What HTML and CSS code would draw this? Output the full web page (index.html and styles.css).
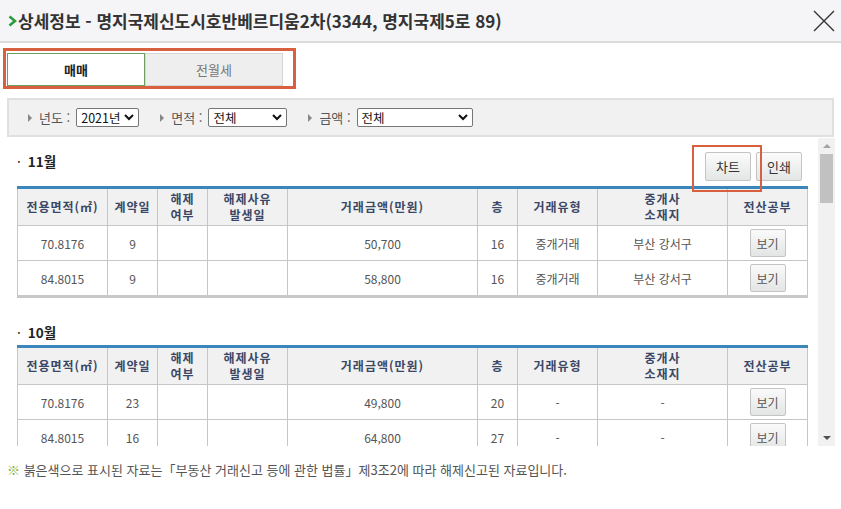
FILE: index.html
```html
<!DOCTYPE html>
<html lang="ko">
  <head>
    <meta charset="UTF-8" />
    <meta name="viewport" content="width=device-width, initial-scale=1.0" />
    <title>상세정보</title>
    <link rel="stylesheet" href="styles.css">
  </head>
  <body>
    <!-- 제목 -->
    <div class="header">
      <h1 class="title">
        <svg class="chev" width="9" height="12" viewBox="0 0 9 12"><polyline points="1.5,1.5 7,6 1.5,10.5" fill="none" stroke="#2a9a3c" stroke-width="2.6" /></svg>
        상세정보 - 명지국제신도시호반베르디움2차(3344, 명지국제5로 89)
      </h1>
      <a href="#" class="close">
        <svg width="22" height="22" viewBox="0 0 22 22"><path d="M1 1 L21 21 M21 1 L1 21" stroke="#333" stroke-width="1.4" /></svg>
      </a>
    </div>

    <!-- 탭 -->
    <div class="tabs-mark">
      <div class="tabs">
        <a href="#" class="tab active">매매</a>
        <a href="#" class="tab">전월세</a>
      </div>
    </div>

    <!-- 검색조건 -->
    <div class="filter">
      <div class="filter-item">
        <span class="tri"></span>
        <span class="label">년도 :</span>
        <div class="select sel-year">2021년 <svg width="10" height="7" viewBox="0 0 10 7"><polyline points="1,1 5,5 9,1" fill="none" stroke="#111" stroke-width="2" /></svg></div>
      </div>
      <div class="filter-item">
        <span class="tri"></span>
        <span class="label">면적 :</span>
        <div class="select sel-area">전체 <svg width="10" height="7" viewBox="0 0 10 7"><polyline points="1,1 5,5 9,1" fill="none" stroke="#111" stroke-width="2" /></svg></div>
      </div>
      <div class="filter-item">
        <span class="tri"></span>
        <span class="label">금액 :</span>
        <div class="select sel-price">전체 <svg width="10" height="7" viewBox="0 0 10 7"><polyline points="1,1 5,5 9,1" fill="none" stroke="#111" stroke-width="2" /></svg></div>
      </div>
    </div>

    <!-- 목록 -->
    <div class="scroll">
      <div class="scroll-content">
        <div class="month">
          <div class="month-head">
            <h3><span class="dot">·</span>11월</h3>
            <div class="actions">
              <button class="btn mark">차트</button>
              <button class="btn">인쇄</button>
            </div>
          </div>
          <table class="deal">
            <colgroup>
              <col style="width:90px" /><col style="width:50px" /><col style="width:50px" /><col style="width:80px" /><col style="width:190px" /><col style="width:40px" /><col style="width:80px" /><col style="width:130px" /><col style="width:80px" />
            </colgroup>
            <tr>
              <th>전용면적(㎡)</th><th>계약일</th><th>해제<br />여부</th><th>해제사유<br />발생일</th><th>거래금액(만원)</th><th>층</th><th>거래유형</th><th>중개사<br />소재지</th><th>전산공부</th>
            </tr>
            <tr>
              <td>70.8176</td><td>9</td><td></td><td></td><td>50,700</td><td>16</td><td>중개거래</td><td>부산 강서구</td><td><button class="btn-view">보기</button></td>
            </tr>
            <tr>
              <td>84.8015</td><td>9</td><td></td><td></td><td>58,800</td><td>16</td><td>중개거래</td><td>부산 강서구</td><td><button class="btn-view">보기</button></td>
            </tr>
          </table>
        </div>

        <div class="month">
          <div class="month-head">
            <h3><span class="dot">·</span>10월</h3>
          </div>
          <table class="deal">
            <colgroup>
              <col style="width:90px" /><col style="width:50px" /><col style="width:50px" /><col style="width:80px" /><col style="width:190px" /><col style="width:40px" /><col style="width:80px" /><col style="width:130px" /><col style="width:80px" />
            </colgroup>
            <tr>
              <th>전용면적(㎡)</th><th>계약일</th><th>해제<br />여부</th><th>해제사유<br />발생일</th><th>거래금액(만원)</th><th>층</th><th>거래유형</th><th>중개사<br />소재지</th><th>전산공부</th>
            </tr>
            <tr>
              <td>70.8176</td><td>23</td><td></td><td></td><td>49,800</td><td>20</td><td>-</td><td>-</td><td><button class="btn-view">보기</button></td>
            </tr>
            <tr>
              <td>84.8015</td><td>16</td><td></td><td></td><td>64,800</td><td>27</td><td>-</td><td>-</td><td><button class="btn-view">보기</button></td>
            </tr>
          </table>
        </div>
      </div>

      <div class="scrollbar">
        <span class="arrow up"></span>
        <div class="track"><div class="thumb"></div></div>
        <span class="arrow down"></span>
      </div>
    </div>

    <p class="note"><span class="mark-sym">※</span> 붉은색으로 표시된 자료는「부동산 거래신고 등에 관한 법률」제3조2에 따라 해제신고된 자료입니다.</p>
  </body>
</html>
```

FILE: styles.css
```css
body {
  font-family: "Noto Sans CJK KR", "Noto Sans", sans-serif;
  background: #fff;
  color: #333;
  margin: 0;
  padding: 0;
  width: 841px;
}

.header {
  height: 41px;
  background: #f5f5f7;
  border-bottom: 2px solid #dcdcdc;
  display: flex;
  align-items: center;
  justify-content: space-between;
  padding: 0 6px 0 8px;
}

.title {
  margin: 0;
  font-size: 17px;
  font-weight: bold;
  color: #333;
  display: flex;
  align-items: center;
}

.chev {
  margin-right: 1px;
}

.close {
  display: block;
  height: 22px;
  margin-top: 1px;
}

.tabs-mark {
  width: 286px;
  margin: 5px 0 0 3px;
  padding: 2px 0 0 1px;
  border: 3px solid #d9603f;
}

.tabs {
  display: flex;
}

.tab {
  width: 138px;
  height: 33px;
  box-sizing: border-box;
  display: flex;
  align-items: center;
  justify-content: center;
  font-size: 13px;
  text-decoration: none;
  background: #eee;
  border: 1px solid #d6d6d6;
  color: #777;
}

.tab.active {
  background: #fff;
  border-color: #6c9f60;
  color: #222;
  font-weight: bold;
}

.filter {
  margin: 9px 7px 0 7px;
  height: 35px;
  background: #f1f1f1;
  border: 2px solid #e0e0e0;
  display: flex;
  align-items: center;
  padding-left: 19px;
  gap: 21px;
}

.filter-item {
  display: flex;
  align-items: center;
}

.tri {
  width: 0;
  height: 0;
  border-left: 4px solid #888;
  border-top: 4px solid transparent;
  border-bottom: 4px solid transparent;
  margin-right: 7px;
}

.label {
  font-size: 13px;
  color: #555;
  margin-right: 6px;
}

.select {
  height: 19px;
  box-sizing: border-box;
  border: 1px solid #767676;
  border-radius: 2px;
  background: #fff;
  font-size: 12.5px;
  color: #111;
  display: flex;
  align-items: center;
  justify-content: space-between;
  padding: 0 4px 0 4px;
}

.sel-year {
  width: 63px;
}

.sel-area {
  width: 79px;
}

.sel-price {
  width: 116px;
}

.scroll {
  display: flex;
  height: 308px;
  margin: 1px 6px 0 7px;
}

.scroll-content {
  flex: 1;
  overflow: hidden;
  padding: 13px 0 0 10px;
}

.month {
  width: 790px;
  margin-bottom: 24px;
}

.month-head {
  display: flex;
  justify-content: space-between;
  align-items: flex-start;
  margin-bottom: 3px;
}

.month-head h3 {
  margin: 0;
  font-size: 13.5px;
  line-height: 20px;
  color: #222;
}

.dot {
  font-weight: normal;
  margin-right: 7px;
}

.actions {
  display: flex;
  gap: 5px;
  margin: 1px 5px 2px 0;
}

.btn {
  width: 46px;
  height: 29px;
  font-family: inherit;
  font-size: 13px;
  color: #333;
  background: linear-gradient(#fbfbfb, #e4e6e6);
  border: 1px solid #c4c4c4;
  border-radius: 2px;
  padding: 0;
  cursor: pointer;
}

.btn.mark {
  position: relative;
}

.btn.mark::after {
  content: "";
  position: absolute;
  top: -8px;
  left: -14px;
  right: -12px;
  bottom: -12px;
  border: 2px solid #d9603f;
}

.deal {
  width: 790px;
  table-layout: fixed;
  border-collapse: collapse;
  border-top: 3px solid #3b86bb;
  border-bottom: 3px solid #c8c8c8;
}

.deal th,
.deal td {
  border: 1px solid #c6c6c6;
  text-align: center;
  padding: 0;
}

.deal th {
  height: 36px;
  background: #f1f1f1;
  font-size: 12px;
  line-height: 16px;
  font-weight: bold;
  color: #3a4766;
  letter-spacing: 1px;
}

.deal td {
  height: 34px;
  font-size: 12px;
  color: #555;
}

.btn-view {
  width: 36px;
  height: 28px;
  font-family: inherit;
  font-size: 12px;
  color: #555;
  background: linear-gradient(#fafafa, #e3e5e5);
  border: 1px solid #c4c4c4;
  border-radius: 2px;
  padding: 0;
  vertical-align: middle;
}

.scrollbar {
  width: 17px;
  background: #f1f1f1;
  display: flex;
  flex-direction: column;
  align-items: center;
}

.arrow {
  width: 0;
  height: 0;
  border-left: 4px solid transparent;
  border-right: 4px solid transparent;
}

.arrow.up {
  border-bottom: 4px solid #a3a3a3;
  margin: 6px 0 6px;
}

.arrow.down {
  border-top: 4px solid #505050;
  margin: 6px 0 6px;
}

.track {
  flex: 1;
  width: 100%;
  display: flex;
  justify-content: center;
}

.thumb {
  width: 13px;
  height: 49px;
  background: #c1c1c1;
}

.note {
  margin: 15px 0 0 7px;
  font-size: 13px;
  line-height: 18px;
  color: #555;
}

.mark-sym {
  color: #8ab03c;
}
```
